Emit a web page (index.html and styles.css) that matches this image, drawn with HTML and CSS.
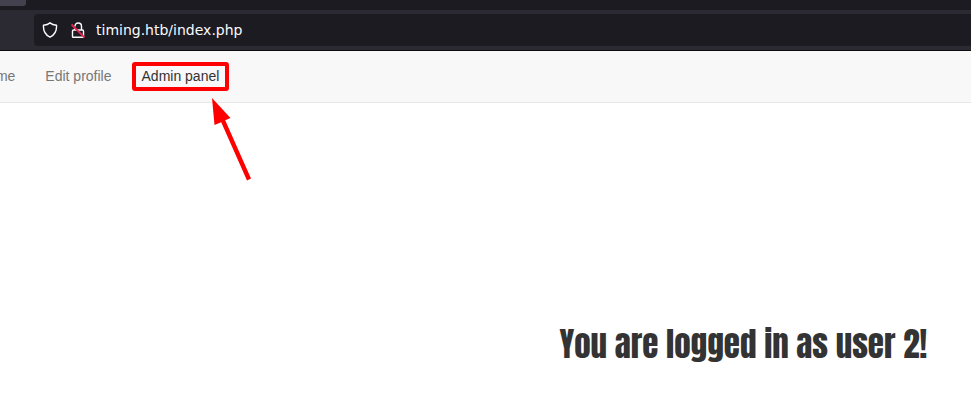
FILE: index.html
```
<!DOCTYPE html>
<html lang="en">
<head>
<meta charset="utf-8">
<title>Timing</title>
<link rel="stylesheet" href="styles.css">
</head>
<body>
<header class="browser">
  <div class="tabstrip"><div class="tab"></div></div>
  <div class="toolbar">
    <div class="urlbar">
      <svg class="icon" viewBox="0 0 16 16" aria-hidden="true">
        <path class="line" d="M8 .9C6.300 2.300 4 3 1.500 3.300C1.100 8.700 3 12.800 8 15.200C13 12.800 14.900 8.700 14.500 3.300C12 3 9.700 2.300 8 .9Z"/>
      </svg>
      <svg class="icon" viewBox="0 0 16 16" aria-hidden="true">
        <path class="line" d="M5 4.500C5 2.200 6.200 1 8.200 1C10.300 1 11.500 2.300 11.500 4.500V8M5 8H12.500Q13.500 8 13.500 9V14.500Q13.500 15.300 12.700 15.300H3.500Q2.500 15.300 2.500 14.500V9Q2.500 8 3.500 8H5V6"/>
        <path class="slash" d="M1.500 2.500L14.500 15.500"/>
      </svg>
      <input class="address" type="text" value="timing.htb/index.php" aria-label="Address" spellcheck="false">
    </div>
  </div>
</header>
<nav class="navbar">
  <a class="link" href="#">Home</a>
  <a class="link" href="#">Edit profile</a>
  <a class="link link-marked" href="#">Admin panel
    <span class="marker"></span>
    <svg class="arrow" viewBox="0 0 42 84" aria-hidden="true">
      <path d="M2 0L20.500 20L15.200 22.200L41 80.500L37 82.500L11.200 24.200L4.500 27Z"/>
    </svg>
  </a>
</nav>
<main class="content">
  <h1 class="message">You are logged in as user 2!</h1>
</main>
</body>
</html>
```
FILE: styles.css
```
* { box-sizing: border-box; }

body {
  margin: 0;
  overflow: hidden;
  background: #fff;
  color: #333;
  font: 14px/20px "Liberation Sans", Arial, sans-serif;
}

.tabstrip {
  height: 10px;
  background: #1c1b22;
}

.tab {
  width: 26px;
  height: 6px;
  border-radius: 0 0 3px 0;
  background: #42414d;
}

.toolbar {
  padding: 4px 0 4px 34px;
  border-bottom: 1px solid #0c0c0d;
  background: #2b2a33;
}

.urlbar {
  display: flex;
  align-items: center;
  gap: 12px;
  height: 32px;
  padding-left: 8px;
  border-radius: 4px 0 0 4px;
  background: #1c1b22;
}

.icon {
  flex: none;
  width: 16px;
  height: 16px;
}

.line {
  fill: none;
  stroke: #fbfbfe;
  stroke-width: 1.400;
}

.slash {
  stroke: #e22850;
  stroke-width: 1.800;
}

.address {
  flex: 1;
  min-width: 0;
  margin-left: -2px;
  padding: 0;
  border: 0;
  outline: 0;
  background: transparent;
  color: #fbfbfe;
  font: 14px/20px "DejaVu Sans", sans-serif;
}

.navbar {
  display: flex;
  margin-left: -37px;
  border-bottom: 1px solid #e7e7e7;
  background: #f8f8f8;
}

.link {
  padding: 15px 15px 16px;
  color: #777;
  text-decoration: none;
  white-space: nowrap;
}

.link-marked {
  position: relative;
  color: #333;
}

.marker {
  position: absolute;
  inset: 11px 5px 11px 5px;
  border: 4px solid #f00;
  border-radius: 3px;
}

.arrow {
  position: absolute;
  top: 47px;
  left: 83px;
  width: 42px;
  height: 84px;
  fill: #f00;
}

.content {
  padding: 221px 44px 0;
}

.message {
  margin: 0;
  font: 33px/40px Impact, Anton, "Liberation Sans", sans-serif;
  text-align: right;
}
```
